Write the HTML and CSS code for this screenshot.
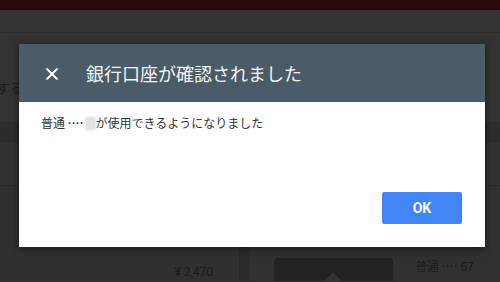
FILE: index.html
```html
<!DOCTYPE html>
<html lang="ja">
<head>
    <meta charset="UTF-8">
    <meta name="viewport" content="width=device-width, initial-scale=1.0">
    <title>銀行口座の確認</title>
    <link rel="stylesheet" href="styles.css">
</head>
<body>
    <div class="page">
        <div class="topbar"></div>
        <div class="toolbar"></div>

        <section class="intro">
            <div class="intro-text"><span>口座を確認する</span></div>
        </section>

        <div class="subhead"></div>
        <div class="band"></div>

        <div class="lower">
            <div class="col-left">
                <p class="amount">¥ 2,470</p>
            </div>
            <div class="col-divider"></div>
            <div class="col-right">
                <div class="bank-card"><span class="card-arrow"></span></div>
                <p class="account">普通 <span class="dots">····</span> 67</p>
            </div>
        </div>
    </div>

    <!-- Confirmation dialog -->
    <div class="dialog">
        <div class="dialog-header">
            <svg class="close-icon" width="14" height="14" viewBox="0 0 14 14">
                <path d="M1.5 1.5 L12.5 12.5 M12.5 1.5 L1.5 12.5" stroke="#fff" stroke-width="1.8" fill="none"/>
            </svg>
            <h2>銀行口座が確認されました</h2>
        </div>
        <div class="dialog-body">
            <p>普通 <span class="dots">····</span> <span class="masked"></span>が使用できるようになりました</p>
        </div>
        <div class="dialog-actions">
            <button class="ok-btn">OK</button>
        </div>
    </div>
</body>
</html>
```

FILE: styles.css
```css
html, body {
    margin: 0;
    padding: 0;
    width: 500px;
    height: 282px;
    overflow: hidden;
    background-color: #323232;
    font-family: "Noto Sans CJK JP", "Noto Sans", sans-serif;
}

.page {
    width: 500px;
    height: 282px;
}

.topbar {
    height: 10px;
    background-color: #270a0a;
}

.toolbar {
    height: 22px;
    background-color: #343434;
    border-bottom: 1px solid #2b2b2b;
}

.intro {
    height: 89px;
    background-color: #333;
}

.intro-text {
    width: 24px;
    padding-top: 45px;
    overflow: hidden;
    display: flex;
    justify-content: flex-end;
    white-space: nowrap;
    font-size: 14px;
    line-height: 18px;
    color: #1e1e1e;
}

.subhead {
    height: 21px;
    background-color: #2d2d2d;
}

.band {
    height: 42px;
    background-color: #313131;
    border-bottom: 1px solid #292929;
}

.lower {
    display: grid;
    grid-template-columns: 237px 13px 1fr;
    height: 95px;
    overflow: hidden;
}

.col-left {
    background-color: #303030;
    display: flex;
    justify-content: flex-end;
    padding-right: 24px;
}

.amount {
    margin: 79px 0 0;
    font-family: Roboto, "Noto Sans CJK JP", sans-serif;
    font-size: 12px;
    line-height: 14px;
    color: #1c1c1c;
}

.col-divider {
    background-color: #2b2b2b;
    border-left: 1px solid #383838;
}

.col-right {
    background-color: #313131;
    display: flex;
    align-items: flex-start;
    padding: 72px 0 0 24px;
    gap: 22px;
}

.bank-card {
    width: 119px;
    height: 23px;
    background-color: #222;
    border-radius: 4px 4px 0 0;
    position: relative;
    overflow: hidden;
}

.card-arrow {
    position: absolute;
    left: 50px;
    top: 18px;
    width: 18px;
    height: 18px;
    background-color: #333;
    transform: rotate(45deg);
}

.account {
    margin: 0;
    font-size: 12px;
    line-height: 16px;
    color: #1c1c1c;
    white-space: nowrap;
}

.dots {
    font-family: Roboto, sans-serif;
    font-weight: bold;
    letter-spacing: 0.4px;
}

/* Dialog */
.dialog {
    position: absolute;
    left: 19px;
    top: 44px;
    width: 466px;
    height: 203px;
    background-color: #fff;
    box-shadow: 0 2px 8px rgba(0, 0, 0, 0.5);
    display: flex;
    flex-direction: column;
}

.dialog-header {
    height: 58px;
    background-color: #4a5c67;
    display: flex;
    align-items: center;
    padding-left: 26px;
}

.close-icon {
    flex: none;
    margin-top: 1px;
}

.dialog-header h2 {
    margin: 0 0 0 27px;
    font-size: 18px;
    font-weight: normal;
    color: #f3f5f6;
    line-height: 24px;
}

.dialog-body {
    flex: 1;
    padding: 13px 0 0 22px;
}

.dialog-body p {
    margin: 0;
    font-size: 12px;
    line-height: 16px;
    color: #333;
}

.masked {
    display: inline-block;
    width: 11px;
    height: 13px;
    margin-left: -2px;
    vertical-align: -2px;
    background-color: #e2e2e2;
    filter: blur(1px);
}

.dialog-actions {
    display: flex;
    justify-content: flex-end;
    padding: 0 23px 23px 0;
}

.ok-btn {
    width: 80px;
    height: 32px;
    border: none;
    border-radius: 2px;
    background-color: #4285f4;
    color: #fff;
    font-family: Roboto, "Liberation Sans", sans-serif;
    font-size: 14px;
    font-weight: bold;
    cursor: pointer;
}
```
